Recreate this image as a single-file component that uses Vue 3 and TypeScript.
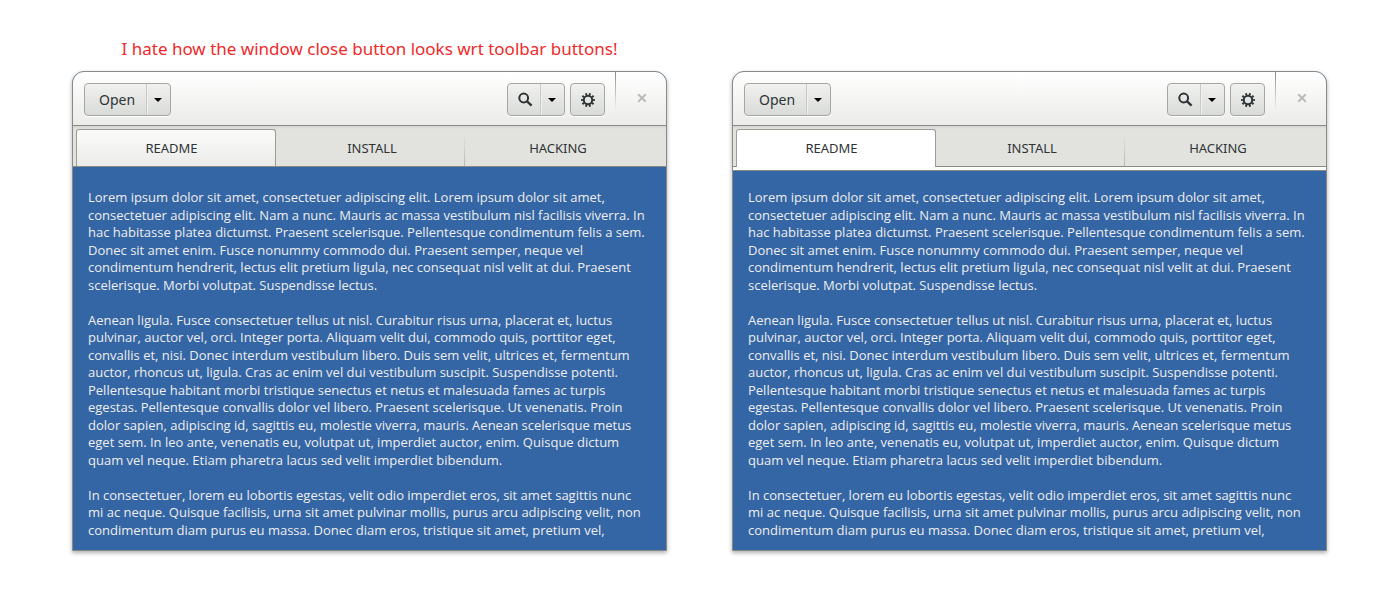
<script setup lang="ts">
interface Win {
  id: string
  note: string
  strip: boolean
}

const windows: Win[] = [
  { id: 'a', note: 'I hate how the window close button looks wrt toolbar buttons!', strip: false },
  { id: 'b', note: '', strip: true },
]

const tabs: string[] = ['README', 'INSTALL', 'HACKING']

const paragraphs: string[][] = [
  [
    'Lorem ipsum dolor sit amet, consectetuer adipiscing elit. Lorem ipsum dolor sit amet,',
    'consectetuer adipiscing elit. Nam a nunc. Mauris ac massa vestibulum nisl facilisis viverra. In',
    'hac habitasse platea dictumst. Praesent scelerisque. Pellentesque condimentum felis a sem.',
    'Donec sit amet enim. Fusce nonummy commodo dui. Praesent semper, neque vel',
    'condimentum hendrerit, lectus elit pretium ligula, nec consequat nisl velit at dui. Praesent',
    'scelerisque. Morbi volutpat. Suspendisse lectus.',
  ],
  [
    'Aenean ligula. Fusce consectetuer tellus ut nisl. Curabitur risus urna, placerat et, luctus',
    'pulvinar, auctor vel, orci. Integer porta. Aliquam velit dui, commodo quis, porttitor eget,',
    'convallis et, nisi. Donec interdum vestibulum libero. Duis sem velit, ultrices et, fermentum',
    'auctor, rhoncus ut, ligula. Cras ac enim vel dui vestibulum suscipit. Suspendisse potenti.',
    'Pellentesque habitant morbi tristique senectus et netus et malesuada fames ac turpis',
    'egestas. Pellentesque convallis dolor vel libero. Praesent scelerisque. Ut venenatis. Proin',
    'dolor sapien, adipiscing id, sagittis eu, molestie viverra, mauris. Aenean scelerisque metus',
    'eget sem. In leo ante, venenatis eu, volutpat ut, imperdiet auctor, enim. Quisque dictum',
    'quam vel neque. Etiam pharetra lacus sed velit imperdiet bibendum.',
  ],
  [
    'In consectetuer, lorem eu lobortis egestas, velit odio imperdiet eros, sit amet sagittis nunc',
    'mi ac neque. Quisque facilisis, urna sit amet pulvinar mollis, purus arcu adipiscing velit, non',
    'condimentum diam purus eu massa. Donec diam eros, tristique sit amet, pretium vel,',
  ],
]
</script>

<template>
  <main class="page">
    <section v-for="w in windows" :key="w.id" class="column">
      <p class="note">{{ w.note }}</p>
      <article class="window" :class="{ strip: w.strip }">
        <header class="toolbar">
          <div class="group">
            <button type="button" class="btn open">Open</button>
            <button type="button" class="btn drop" aria-label="Open recent">
              <svg width="8" height="4" viewBox="0 0 8 4"><path d="M0 0h8L4 4z" fill="#000" /></svg>
            </button>
          </div>
          <div class="spacer"></div>
          <div class="group">
            <button type="button" class="btn find" aria-label="Search">
              <svg width="16" height="16" viewBox="0 0 16 16" fill="none" stroke="#2e3436">
                <circle cx="6.7" cy="6" r="4.4" stroke-width="2" />
                <path d="M9.8 9.1L14.6 13.6" stroke-width="2.3" />
              </svg>
            </button>
            <button type="button" class="btn drop" aria-label="Search options">
              <svg width="8" height="4" viewBox="0 0 8 4"><path d="M0 0h8L4 4z" fill="#000" /></svg>
            </button>
          </div>
          <div class="group gear">
            <button type="button" class="btn" aria-label="Settings">
              <svg width="16" height="16" viewBox="0 0 16 16" fill="none" stroke="#2e3436">
                <circle cx="8" cy="8" r="4.2" stroke-width="2" />
                <circle
                  cx="8"
                  cy="8"
                  r="5.9"
                  stroke-width="2.1"
                  pathLength="20"
                  stroke-dasharray="1 1"
                  stroke-dashoffset="0.5"
                />
              </svg>
            </button>
          </div>
          <button type="button" class="close" aria-label="Close">
            <svg width="10" height="10" viewBox="0 0 10 10">
              <path d="M1.2 1.2l7.6 7.6M8.8 1.2L1.2 8.8" stroke="#babdb6" stroke-width="2" />
            </svg>
          </button>
        </header>
        <nav class="tabs" role="tablist">
          <button
            v-for="(t, i) in tabs"
            :key="t"
            type="button"
            role="tab"
            class="tab"
            :class="{ active: i === 0 }"
            :aria-selected="i === 0"
          >
            {{ t }}
          </button>
        </nav>
        <div class="content">
          <p v-for="(p, i) in paragraphs" :key="i">
            <span v-for="line in p" :key="line">{{ line }}</span>
          </p>
        </div>
      </article>
    </section>
  </main>
</template>

<style>
body {
  margin: 0;
  background: #fff;
}
</style>

<style scoped>
.page {
  display: grid;
  grid-template-columns: 1fr 1fr;
  gap: 65px;
  padding: 37px 73px 40px 72px;
  font-family: 'Noto Sans', 'Open Sans', sans-serif;
  color: #2e3436;
}
.column {
  min-width: 0;
}
.note {
  height: 24px;
  margin: 0 0 10px;
  font-size: 17px;
  line-height: 24px;
  text-align: center;
  white-space: nowrap;
  color: #ef2929;
}
.window {
  border: 1px solid #888a85;
  border-radius: 12px 12px 0 0;
  overflow: hidden;
  background: #3465a4;
  box-shadow: 0 2px 4px rgba(0, 0, 0, 0.32);
}
.toolbar {
  display: flex;
  align-items: flex-start;
  height: 53px;
  padding-left: 11px;
  border-bottom: 1px solid #888a85;
  background: linear-gradient(#fff, #ebebe9);
}
.group {
  display: flex;
  box-sizing: border-box;
  height: 33px;
  margin-top: 11px;
  border: 1px solid #a5a8a2;
  border-radius: 4px;
  background: linear-gradient(#f1f2f0, #d9dbd8);
  box-shadow: 0 1px 0 #fff;
}
.btn {
  display: flex;
  align-items: center;
  justify-content: center;
  width: 33px;
  padding: 0;
  border: 0;
  background: none;
  font: inherit;
  font-size: 14px;
  color: #2e3436;
}
.btn.open {
  width: 61px;
  padding-left: 3px;
}
.btn.find {
  width: 32px;
  padding-left: 2px;
}
.btn.drop {
  width: 24px;
  padding-right: 2px;
  border-left: 1px solid #c8cac6;
  box-shadow: inset 1px 0 0 #f0f1ef;
}
.spacer {
  flex: 1;
}
.gear {
  margin-left: 5px;
}
.close {
  display: flex;
  align-items: center;
  justify-content: center;
  width: 51px;
  height: 52px;
  margin-left: 10px;
  padding: 0 0 0 2px;
  border: 0;
  background: linear-gradient(#888a85, rgba(136, 138, 133, 0)) 0 0 / 1px 38px no-repeat;
}
.tabs {
  display: grid;
  grid-template-columns: 200fr 188fr 187fr;
  height: 41px;
  box-sizing: border-box;
  padding: 3px 15px 0 3px;
  border-bottom: 1px solid #888a85;
  background: linear-gradient(#d3d4cf, #e2e3df 3px);
}
.tab {
  box-sizing: border-box;
  height: 37px;
  padding: 0 0 0 4px;
  border: 0;
  background: none;
  font: inherit;
  font-size: 13px;
  color: #2e3436;
}
.tab:last-child {
  padding: 0 0 0 1px;
  background: linear-gradient(rgba(186, 189, 182, 0), #b5b8b1) 0 100% / 1px 30px no-repeat;
}
.tab.active {
  padding: 0 9px 1px 0;
  border: 1px solid #9a9c97;
  border-bottom: 0;
  border-radius: 3px 3px 0 0;
  background: linear-gradient(#fbfbfa, #ebebe9);
}
.content {
  padding: 22px 15px 11px;
  font-family: 'Open Sans', 'Noto Sans', sans-serif;
  font-size: 14px;
  line-height: 1.25em;
  color: #eeeeec;
}
.content p {
  margin: 0 0 1.25em;
}
.content p:last-child {
  margin-bottom: 0;
}
.content span {
  display: block;
  font-size: 13px;
  white-space: nowrap;
}
.strip .tab.active {
  height: 38px;
  padding-bottom: 2px;
  background: #fff;
}
.strip .content {
  padding-top: 18px;
  border-top: 1px solid #888a85;
  box-shadow: 0 -3px 0 #fff;
  margin-top: 3px;
}
</style>
